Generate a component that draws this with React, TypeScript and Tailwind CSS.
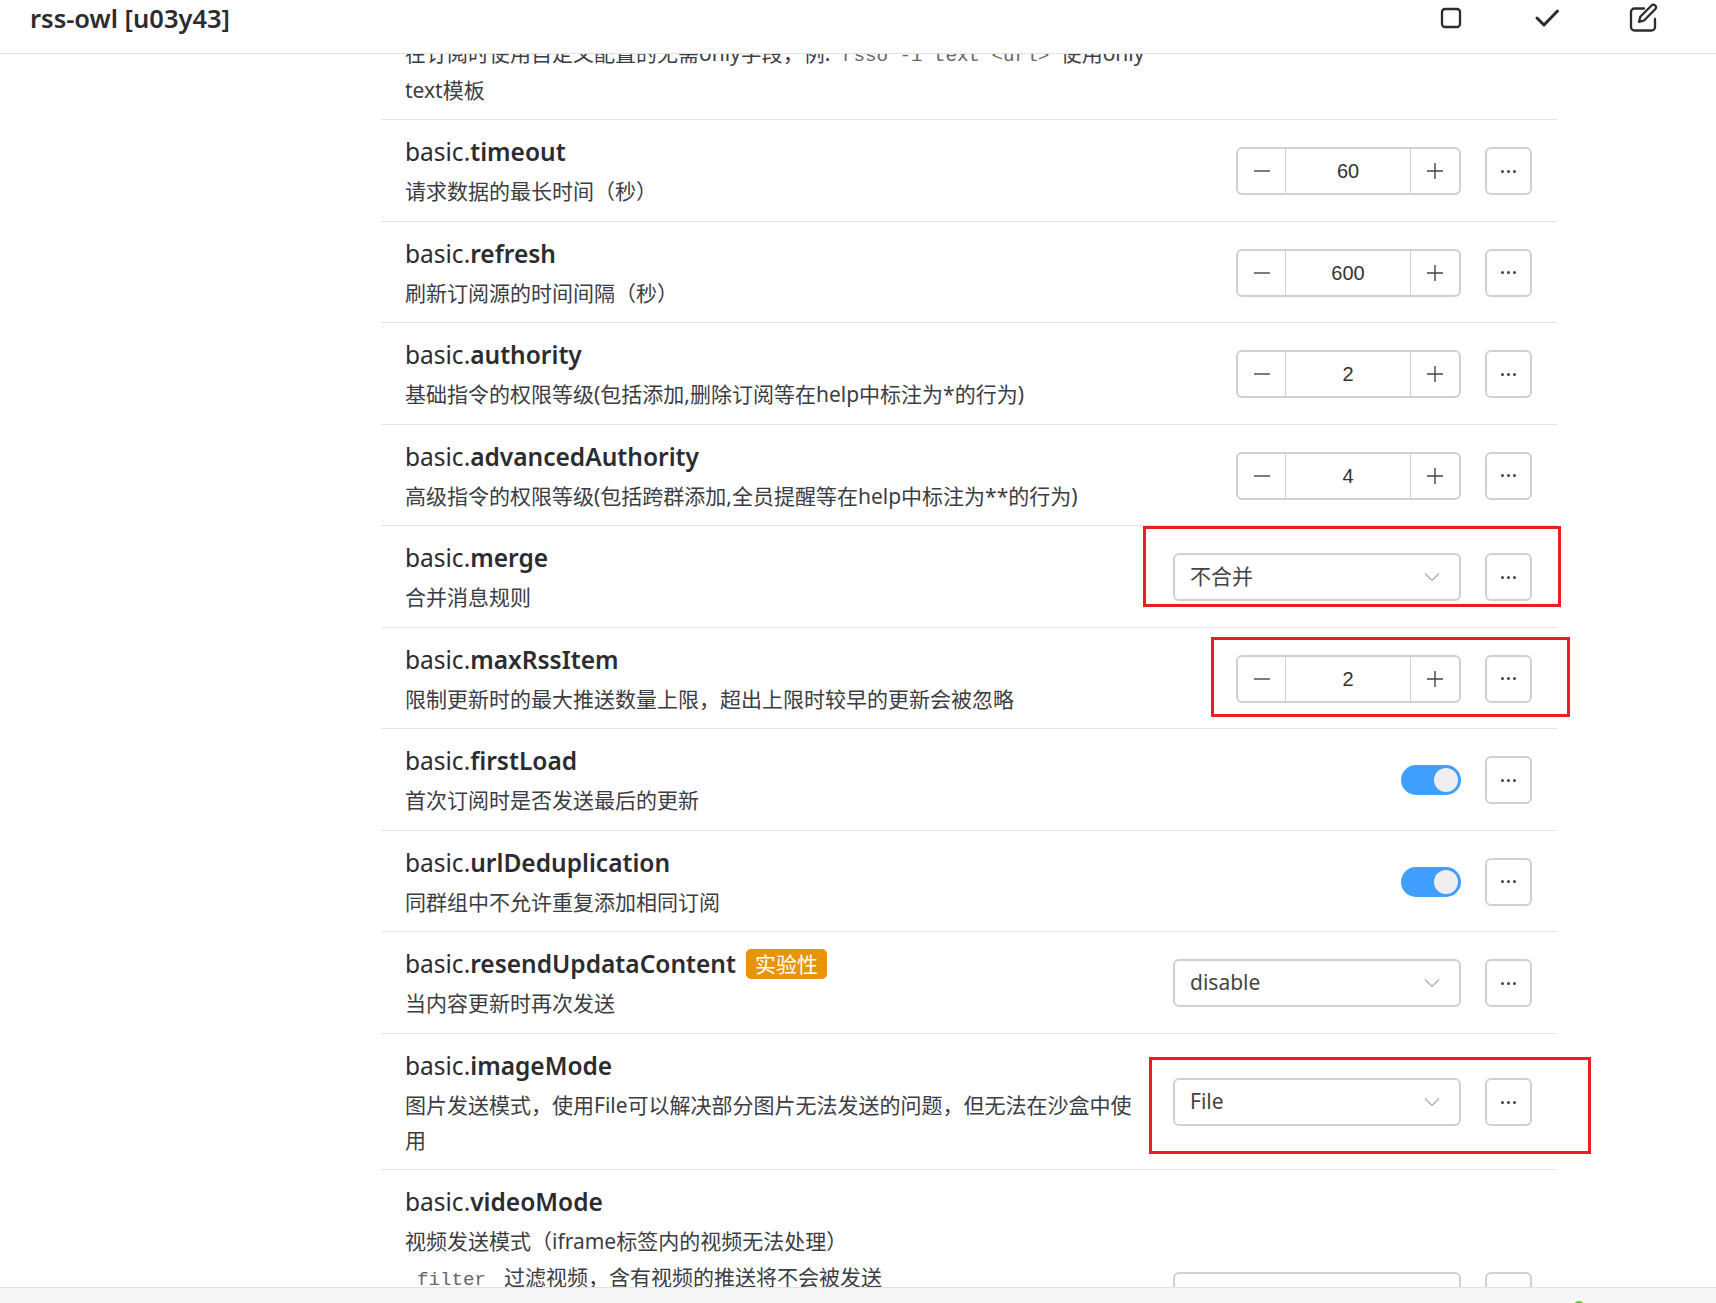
import React from "react";

const CJK = "font-['Noto_Sans','Noto_Sans_CJK_SC',sans-serif]";

function More() {
  return (
    <button className="w-[47px] h-[48px] shrink-0 ml-[24px] border-2 border-[#d0d0d0] rounded-[6px] bg-white flex items-center justify-center gap-[3px]">
      <span className="w-[3px] h-[3px] rounded-full bg-[#444]" />
      <span className="w-[3px] h-[3px] rounded-full bg-[#444]" />
      <span className="w-[3px] h-[3px] rounded-full bg-[#444]" />
    </button>
  );
}

function Num({ v }: { v: string }) {
  return (
    <div className="w-[225px] h-[48px] border-2 border-[#d0d0d0] rounded-[6px] flex items-center bg-white">
      <div className="w-[48px] h-full flex items-center justify-center border-r border-[#d0d0d0]">
        <svg width="18" height="18" viewBox="0 0 18 18"><path d="M1 9h16" stroke="#444" strokeWidth="1.4" /></svg>
      </div>
      <div className="flex-1 text-center text-[20px] text-[#333] font-['Liberation_Sans',sans-serif]">{v}</div>
      <div className="w-[49px] h-full flex items-center justify-center border-l border-[#d0d0d0]">
        <svg width="18" height="18" viewBox="0 0 18 18"><path d="M1 9h16M9 1v16" stroke="#444" strokeWidth="1.4" /></svg>
      </div>
    </div>
  );
}

function Select({ v }: { v: string }) {
  return (
    <div className="w-[288px] h-[48px] border-2 border-[#d0d0d0] rounded-[6px] flex items-center justify-between pl-[15px] pr-[19px] bg-white">
      <span className="text-[21px] text-[#444]">{v}</span>
      <svg width="16" height="10" viewBox="0 0 16 10"><path d="M1 1.5l7 7 7-7" fill="none" stroke="#aaa" strokeWidth="1.2" /></svg>
    </div>
  );
}

function Toggle() {
  return (
    <div className="w-[60px] h-[30px] rounded-full bg-[#409eff] flex items-center justify-end pr-[3px]">
      <span className="w-[24px] h-[24px] rounded-full bg-[#eeeef0]" />
    </div>
  );
}

function Row({ name, desc, control, badge }: { name: string; desc: React.ReactNode; control: React.ReactNode; badge?: string }) {
  return (
    <div className="border-t border-[#e4e4e4] ml-[381px] w-[1176px] pl-[24px] pr-[25px] pt-[14px] pb-[11.5px] flex items-center justify-between">
      <div className="w-[745px]">
        <div className="text-[24.5px] leading-[35px] text-[#2c2c30] flex items-center">
          <span>basic.<b className="font-semibold">{name}</b></span>
          {badge && <span className="ml-[10px] h-[30px] px-[9px] rounded-[5px] bg-[#e6950a] text-white text-[21px] leading-[30px]">{badge}</span>}
        </div>
        <div className="text-[21px] leading-[35px] mt-[5px] text-[#3c3c43]">{desc}</div>
      </div>
      <div className="flex items-center mb-[1px]">
        {control}
        <More />
      </div>
    </div>
  );
}

export default function App() {
  return (
    <div className={`h-[1303px] flex flex-col overflow-hidden bg-white ${CJK}`}>
      <header className="h-[54px] shrink-0 border-b border-[#e2e2e2] flex items-center justify-between pl-[30px] pr-[25px] pb-[18px] relative z-10 bg-white">
        <span className="text-[25.5px] font-semibold text-[#2c2c30] leading-[36px]">rss-owl [u03y43]</span>
        <div className="flex items-center">
          <div className="w-[96px] flex justify-center">
            <svg width="22" height="22" viewBox="0 0 22 22"><rect x="2" y="2" width="18" height="18" rx="3" fill="none" stroke="#2c2c30" strokeWidth="2.3" /></svg>
          </div>
          <div className="w-[96px] flex justify-center">
            <svg width="26" height="20" viewBox="0 0 26 20"><path d="M3 10l7 7L23.5 3" fill="none" stroke="#2c2c30" strokeWidth="3" strokeLinecap="round" strokeLinejoin="round" /></svg>
          </div>
          <div className="w-[96px] flex justify-center">
            <svg width="29" height="29" viewBox="0 0 29 29" fill="none" stroke="#2c2c30" strokeWidth="2.3" strokeLinecap="round" strokeLinejoin="round"><path d="M26 16v8a3.5 3.5 0 0 1-3.5 3.5H5.5A3.5 3.5 0 0 1 2 24V9a3.5 3.5 0 0 1 3.5-3.5H15" /><path d="M22.5 2.5a2.6 2.6 0 0 1 3.7 3.7L15 17.5l-5 1.3 1.3-5z" /></svg>
          </div>
        </div>
      </header>
      <main className="flex-1 overflow-hidden relative">
        <div className="-mt-[18px]">
          <div className="ml-[381px] w-[1176px] pl-[24px] text-[21px] leading-[34px] text-[#3c3c43] pb-[12px]">
            <div className="w-[745px]">在订阅时使用自定义配置的无需only字段，例: <code className="font-['Liberation_Mono',monospace] text-[19.2px] text-[#666] px-[6px]">rsso -i text &lt;url&gt;</code> 使用only text模板</div>
          </div>
          <Row name="timeout" desc="请求数据的最长时间（秒）" control={<Num v="60" />} />
          <Row name="refresh" desc="刷新订阅源的时间间隔（秒）" control={<Num v="600" />} />
          <Row name="authority" desc="基础指令的权限等级(包括添加,删除订阅等在help中标注为*的行为)" control={<Num v="2" />} />
          <Row name="advancedAuthority" desc="高级指令的权限等级(包括跨群添加,全员提醒等在help中标注为**的行为)" control={<Num v="4" />} />
          <Row name="merge" desc="合并消息规则" control={<Select v="不合并" />} />
          <Row name="maxRssItem" desc="限制更新时的最大推送数量上限，超出上限时较早的更新会被忽略" control={<Num v="2" />} />
          <Row name="firstLoad" desc="首次订阅时是否发送最后的更新" control={<Toggle />} />
          <Row name="urlDeduplication" desc="同群组中不允许重复添加相同订阅" control={<Toggle />} />
          <Row name="resendUpdataContent" badge="实验性" desc="当内容更新时再次发送" control={<Select v="disable" />} />
          <Row name="imageMode" desc="图片发送模式，使用File可以解决部分图片无法发送的问题，但无法在沙盒中使用" control={<Select v="File" />} />
          <Row
            name="videoMode"
            desc={
              <>
                <div>视频发送模式（iframe标签内的视频无法处理）</div>
                <div className="leading-[36px]"><code className="font-['Liberation_Mono',monospace] text-[19.2px] text-[#666] pl-[12px] pr-[18px]">filter</code>过滤视频，含有视频的推送将不会被发送</div>
                <div className="pb-[6px]">
                  <div>link 发送视频链接</div>
                  <div>File 发送视频文件</div>
                  <div>URL 发送视频地址</div>
                </div>
              </>
            }
            control={<Select v="filter" />}
          />
        </div>
      </main>
      <footer className="h-[16px] shrink-0 border-t border-[#e2e2e2] bg-[#f6f6f6] overflow-hidden relative z-10 flex justify-end">
        <div className="flex items-start gap-[17px] pt-[13px] text-[16px] leading-[20px] text-[#222] w-[143px] shrink-0 whitespace-nowrap">
          <span className="w-[12px] h-[12px] rounded-full bg-[#67c23a] shrink-0" />
          <span>▲ 0 b/s</span>
        </div>
      </footer>
      <div className="absolute left-[1143px] top-[526px] w-[418px] h-[81px] border-[3px] border-[#ee1c25] z-20" />
      <div className="absolute left-[1211px] top-[637px] w-[359px] h-[80px] border-[3px] border-[#ee1c25] z-20" />
      <div className="absolute left-[1149px] top-[1057px] w-[442px] h-[97px] border-[3px] border-[#ee1c25] z-20" />
    </div>
  );
}
